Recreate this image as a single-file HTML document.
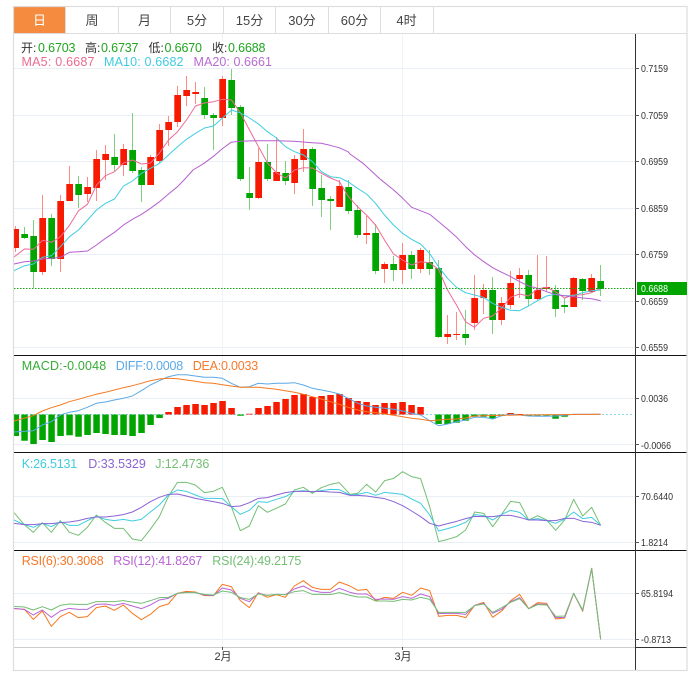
<!DOCTYPE html>
<html lang="zh"><head><meta charset="utf-8"><title>K线图</title>
<style>
html,body{margin:0;padding:0;background:#fff;width:698px;height:683px;overflow:hidden}
svg{display:block;font-family:"Liberation Sans","Noto Sans CJK SC",sans-serif}
.ln{fill:none;stroke-width:1;stroke-linejoin:round}
.z{fill:none;stroke-width:3;stroke-linejoin:round}
.ax{font-size:10px;fill:#333}
</style></head><body>
<svg width="698" height="683" viewBox="0 0 698 683" xmlns="http://www.w3.org/2000/svg">
<!-- grid -->
<path d="M14 68.5H635M14 115.5H635M14 161.5H635M14 208.5H635M14 254.5H635M14 301.5H635M14 347.5H635M14 398.5H635M14 444.5H635M14 496.5H635M14 542.5H635M14 593.5H635M14 639.5H635" stroke="#e9eff4" fill="none"/>
<path d="M222.5 34V647M402.5 34V647" stroke="#edf4f7" fill="none"/>
<!-- toolbar -->
<rect x="14" y="7" width="51" height="26" fill="#f58b3f"/>
<path d="M65.5 7V33M118.5 7V33M170.5 7V33M223.5 7V33M275.5 7V33M328.5 7V33M380.5 7V33M433.5 7V33" stroke="#ddd" fill="none"/>
<path d="M14 33.5H687" stroke="#ddd"/>
<g font-size="13" fill="#444" text-anchor="middle">
<text x="39.5" y="25" fill="#fff">日</text><text x="92" y="25">周</text><text x="144.5" y="25">月</text><text x="197" y="25">5分</text><text x="249.5" y="25">15分</text><text x="302" y="25">30分</text><text x="354.5" y="25">60分</text><text x="406.5" y="25">4时</text>
</g>
<!-- wicks -->
<path stroke="#ff8a80" fill="none" d="M15.5 226V252M42.5 195V275M60.5 195V272M69.5 166V201M87.5 177V202M96.5 150V201M105.5 145V180M123.5 144V176M150.5 155V185M159.5 124V163M168.5 116V146M177.5 86V127M186.5 76V106M195.5 82V104M222.5 76V126M258.5 148V199M276.5 137V181M294.5 155V194M303.5 129V172M339.5 180V207M366.5 216V244M384.5 262V283M402.5 243V284M420.5 248V273M447.5 315V344M456.5 312V340M474.5 275V330M483.5 284V314M501.5 297V325M510.5 271V309M519.5 268V298M537.5 255V300M546.5 256V292M573.5 277V307M591.5 274V292"/>
<path stroke="#7ed07e" fill="none" d="M24.5 227V239M33.5 220V288M51.5 214V266M78.5 176V208M114.5 134V171M132.5 113V173M141.5 167V202M204.5 87V119M213.5 113V150M231.5 69V115M240.5 105V181M249.5 167V210M267.5 144V181M285.5 161V185M312.5 147V206M321.5 175V217M330.5 196V230M348.5 180V214M357.5 205V238M375.5 224V274M393.5 256V281M411.5 251V279M429.5 250V275M438.5 260V338M465.5 310V345M492.5 277V334M528.5 270V306M555.5 285V317M564.5 298V313M582.5 278V300M600.5 265V296"/>
<!-- red bodies -->
<path fill="#f51a00" d="M14 229H19V248H14zM39.3 218h6.7V272h-6.7zM57.3 201h6.7V259h-6.7zM66.3 184h6.7V201h-6.7zM84.3 187h6.7V194h-6.7zM93.3 159h6.7V188h-6.7zM102.3 154h6.7V160h-6.7zM120.3 149h6.7V165h-6.7zM147.3 157h6.7V185h-6.7zM156.3 130h6.7V161h-6.7zM165.3 122h6.7V130h-6.7zM174.3 95h6.7V122h-6.7zM183.3 90h6.7V96h-6.7zM192.3 92h6.7V94h-6.7zM219.3 79h6.7V118h-6.7zM255.3 162h6.7V198h-6.7zM273.3 172h6.7V181h-6.7zM291.3 159h6.7V183h-6.7zM300.3 149h6.7V160h-6.7zM336.3 186h6.7V207h-6.7zM363.3 233h6.7V235h-6.7zM381.3 264h6.7V269h-6.7zM399.3 255h6.7V270h-6.7zM417.3 250h6.7V269h-6.7zM444.3 334h6.7V337h-6.7zM453.3 334h6.7V335h-6.7zM471.3 298h6.7V323h-6.7zM480.3 290h6.7V298h-6.7zM498.3 303h6.7V320h-6.7zM507.3 283h6.7V305h-6.7zM516.3 275h6.7V279h-6.7zM534.3 290h6.7V299h-6.7zM543.3 287h6.7V289h-6.7zM570.3 278h6.7V307h-6.7zM588.3 278h6.7V292h-6.7z"/>
<!-- green bodies -->
<path fill="#00a500" d="M21.3 234h6.7V238h-6.7zM30.3 236h6.7V272h-6.7zM48.3 218h6.7V259h-6.7zM75.3 184h6.7V195h-6.7zM111.3 157h6.7V165h-6.7zM129.3 150h6.7V171h-6.7zM138.3 170h6.7V185h-6.7zM201.3 98h6.7V115h-6.7zM210.3 115h6.7V118h-6.7zM228.3 80h6.7V108h-6.7zM237.3 107h6.7V179h-6.7zM246.3 193h6.7V198h-6.7zM264.3 162h6.7V179h-6.7zM282.3 173h6.7V181h-6.7zM309.3 149h6.7V189h-6.7zM318.3 188h6.7V200h-6.7zM327.3 199h6.7V201h-6.7zM345.3 187h6.7V211h-6.7zM354.3 210h6.7V235h-6.7zM372.3 233h6.7V271h-6.7zM390.3 264h6.7V270h-6.7zM408.3 255h6.7V269h-6.7zM426.3 262h6.7V269h-6.7zM435.3 268h6.7V337h-6.7zM462.3 334h6.7V338h-6.7zM489.3 290h6.7V320h-6.7zM525.3 275h6.7V299h-6.7zM552.3 290h6.7V309h-6.7zM561.3 305h6.7V307h-6.7zM579.3 279h6.7V291h-6.7zM597.3 281h6.7V289h-6.7z"/>
<!-- MA lines -->
<polyline class="ln" stroke="#ee6a95" points="14,257 24.5,249 33.5,249.3 42.5,240.3 51.5,242.3 60.5,236.7 69.5,225.3 78.5,210.7 87.5,204.3 96.5,185 105.5,175.7 114.5,171.7 123.5,163 132.5,160 141.5,164 150.5,163 159.5,153 168.5,140 177.5,131.7 186.5,120 195.5,106 204.5,103 213.5,101.7 222.5,99.3 231.5,100 240.5,113 249.5,130 258.5,146.7 267.5,163 276.5,173 285.5,178 294.5,170 303.5,167.7 312.5,168 321.5,173.3 330.5,178 339.5,181.7 348.5,196.7 357.5,206.7 366.5,215 375.5,225 384.5,240 393.5,254 402.5,260 411.5,265 420.5,261.7 429.5,262.7 438.5,269.3 447.5,290 456.5,305 465.5,321.7 474.5,327.3 483.5,318.3 492.5,316 501.5,308.3 510.5,297.3 519.5,294 528.5,296 537.5,289 546.5,287.3 555.5,291.7 564.5,298 573.5,295 582.5,294.7 591.5,292.7 600.5,288.3"/>
<polyline class="ln" stroke="#3fcde0" points="14,270.7 24.5,265.7 33.5,264 42.5,257.3 51.5,255.7 60.5,246.7 69.5,236.7 78.5,230 87.5,220 96.5,210 105.5,203.3 114.5,199 123.5,186 132.5,181 141.5,173.3 150.5,168.3 159.5,163.3 168.5,155 177.5,146.7 186.5,139.3 195.5,133.3 204.5,128 213.5,126 222.5,118 231.5,110 240.5,113 249.5,118 258.5,124 267.5,131.7 276.5,138 285.5,146.7 294.5,151.7 303.5,155 312.5,161.7 321.5,171.7 330.5,176.7 339.5,177.7 348.5,182 357.5,188.3 366.5,194 375.5,203.3 384.5,215 393.5,225 402.5,233.3 411.5,239.3 420.5,244 429.5,253.3 438.5,266.7 447.5,278.3 456.5,287.3 465.5,292.7 474.5,295 483.5,297.3 492.5,303.3 501.5,307.3 510.5,310.3 519.5,310.7 528.5,306 537.5,300.7 546.5,296 555.5,294.3 564.5,295.7 573.5,295.7 582.5,292.7 591.5,290.7 600.5,290"/>
<polyline class="ln" stroke="#b55fcf" points="14,264 24.5,261.7 33.5,261 42.5,259 51.5,258.3 60.5,257.3 69.5,252.3 78.5,251.7 87.5,251 96.5,245 105.5,238.3 114.5,232.3 123.5,225 132.5,219.3 141.5,214.3 150.5,208.3 159.5,201.7 168.5,194 177.5,186.7 184,180 193,170 204,163.3 213,156.7 222,149 231,142.3 240,141.3 258,140.7 276,140.7 294,141.3 312,142.7 321,143.3 330,145.3 339,147.7 348,151.7 350,154 363,163.3 380,179 393.7,190 402.7,198.3 411.7,207.3 429.7,214.3 438.7,221.7 447.7,229.3 456.7,237.3 465.7,246.7 474.7,255 483.7,261.7 492.7,267.7 501.7,272.3 510.7,276.7 519.7,281.7 528.7,286 537.7,288.3 546.7,291.7 555.7,294.7 564.7,295.7 573.7,296.7 582.7,298 591.7,298.7 600.7,300.7"/>
<!-- current price -->
<path d="M14 288.5H635" stroke="#10a810" stroke-dasharray="1.5 1.5" fill="none"/>
<!-- MACD -->
<path d="M14 414.5H633" stroke="#8fd8ec" stroke-dasharray="2 2" fill="none"/>
<path fill="#f51a00" d="M165.3 412h6.5v2.5h-6.5zM174.3 407h6.5v7.5h-6.5zM183.3 405h6.5v9.5h-6.5zM192.3 404h6.5v10.5h-6.5zM201.3 405h6.5v9.5h-6.5zM210.3 403h6.5v11.5h-6.5zM219.3 401h6.5v13.5h-6.5zM228.3 408h6.5v6.5h-6.5zM246.3 413.7h6.5v.8h-6.5zM255.3 408h6.5v6.5h-6.5zM264.3 406h6.5v8.5h-6.5zM273.3 402h6.5v12.5h-6.5zM282.3 399h6.5v15.5h-6.5zM291.3 395h6.5v19.5h-6.5zM300.3 394h6.5v20.5h-6.5zM309.3 397h6.5v17.5h-6.5zM318.3 396h6.5v18.5h-6.5zM327.3 395h6.5v19.5h-6.5zM336.3 394h6.5v20.5h-6.5zM345.3 398h6.5v16.5h-6.5zM354.3 401h6.5v13.5h-6.5zM363.3 402h6.5v12.5h-6.5zM372.3 405h6.5v9.5h-6.5zM381.3 403h6.5v11.5h-6.5zM390.3 403h6.5v11.5h-6.5zM399.3 402h6.5v12.5h-6.5zM408.3 405h6.5v9.5h-6.5zM417.3 407h6.5v7.5h-6.5zM507.3 413h6.5v1.5h-6.5zM516.3 414h6.5v.5h-6.5z"/>
<path fill="#00a500" d="M14 414.5h5V436h-5zM21.3 414.5h6.5V440.7h-6.5zM30.3 414.5h6.5V444h-6.5zM39.3 414.5h6.5V440h-6.5zM48.3 414.5h6.5V442h-6.5zM57.3 414.5h6.5V436h-6.5zM66.3 414.5h6.5V435.3h-6.5zM75.3 414.5h6.5V436.7h-6.5zM84.3 414.5h6.5V435h-6.5zM93.3 414.5h6.5V433h-6.5zM102.3 414.5h6.5V434h-6.5zM111.3 414.5h6.5V435h-6.5zM120.3 414.5h6.5V435h-6.5zM129.3 414.5h6.5V436h-6.5zM138.3 414.5h6.5V433h-6.5zM147.3 414.5h6.5V425h-6.5zM156.3 414.5h6.5V418h-6.5zM237.3 414.5h6.5V415.7h-6.5zM435.3 414.5h6.5V424h-6.5zM444.3 414.5h6.5V424h-6.5zM453.3 414.5h6.5V422.7h-6.5zM462.3 414.5h6.5V420.7h-6.5zM471.3 414.5h6.5V416.7h-6.5zM480.3 414.5h6.5V416.7h-6.5zM489.3 414.5h6.5V418.7h-6.5zM498.3 414.5h6.5V416h-6.5zM525.3 414.5h6.5V416h-6.5zM534.3 414.5h6.5V415.7h-6.5zM543.3 414.5h6.5V415.7h-6.5zM552.3 414.5h6.5V418.7h-6.5zM561.3 414.5h6.5V416.7h-6.5z"/>
<polyline class="ln" stroke="#5aa9e8" points="14,432 33.3,430.7 42.3,425 51.3,421.7 60.3,415 69.3,412.3 78.3,410.7 87.3,407.3 96.3,403.3 105.3,402 114.3,400 123.3,398.3 132.3,396 141.3,390.7 150.3,385 159.3,380.7 168.3,376.7 177.3,374.7 186.3,374.7 195.3,376 204.3,377.3 213.3,377.3 222.3,378.3 231.3,383.3 240.3,387.3 249.3,386.7 258.3,383.3 267.3,384 276.3,383.3 285.3,383.3 294.3,382.7 303.3,385 312.3,388.3 321.3,390 330.3,391.7 339.3,394 348.3,398.3 357.7,403.3 366.7,406 375.7,407.3 384.7,408.3 393.7,409.3 402.7,411 411.7,413.3 420.7,415 429.7,420.7 438.7,425.7 447.7,424 456.7,421.7 465.7,420 474.7,417.3 483.7,417.3 492.7,419 501.7,415.7 510.7,414.3 519.7,415 528.7,416 537.7,416.3 546.7,416.3 555.7,416 564.7,415.3 573.7,414.3 600.7,414.3"/>
<polyline class="ln" stroke="#f5781f" points="14,421 33.3,415.7 42.3,411 51.3,407.7 60.3,405 69.3,401.7 78.3,399.3 87.3,396.7 96.3,394.3 105.3,392.3 114.3,390 123.3,387.7 132.3,385.7 141.3,383.3 150.3,380.7 159.3,379 168.3,378.3 177.3,378.7 186.3,380 195.3,381.3 204.3,382.7 213.3,383.3 222.3,384.7 231.3,386 240.3,387.3 258.3,387.3 267.3,388.3 276.3,389.3 285.3,390.7 294.3,392.3 303.3,394.3 312.3,396.7 321.3,399 330.3,401.7 339.3,404.3 348.3,407.3 357.7,410 366.7,411.7 375.7,412.7 384.7,414 393.7,415.3 402.7,416.7 411.7,418.3 420.7,419.3 429.7,420.7 438.7,420 447.7,419.3 456.7,419 465.7,418 474.7,416 483.7,415.7 501.7,415.3 519.7,415 600.7,414.3"/>
<!-- KDJ left -->
<g transform="translate(0,450) scale(.33333)">
<polyline class="z" stroke="#74bf74" points="42,188 73,224 100,247 127,218 154,247 181,212 208,247 235,256 262,232 289,195 316,217 343,235 370,235 397,267 424,272 451,238 478,200 505,140 532,97 559,97 586,105 613,128 640,124 667,112 694,170 721,242 748,228 775,167 802,187 829,175 856,162 883,120 910,112 937,130 964,113 991,103 1018,98 1050,133"/>
<polyline class="z" stroke="#3fcde0" points="42,210 73,224 100,232 127,220 154,230 181,215 208,226 235,226 262,212 289,199 316,208 343,212 370,208 397,213 424,208 451,186 478,165 505,135 532,120 559,124 586,135 613,145 640,145 667,146 694,170 721,193 748,181 775,155 802,157 829,148 856,140 883,125 910,122 937,126 964,122 991,118 1018,119 1050,135"/>
<polyline class="z" stroke="#8a63d2" points="42,220 73,224 100,224 127,221 154,221 181,218 208,216 235,212 262,205 289,201 316,201 343,198 370,194 397,186 424,172 451,155 478,142 505,133 532,132 559,138 586,145 613,150 640,155 667,160 694,170 721,168 748,158 775,145 802,143 829,135 856,128 883,124 910,124 937,125 964,124 991,126 1018,127 1050,136"/>
</g>
<!-- KDJ right -->
<g transform="translate(350,450) scale(.33333)">
<polyline class="z" stroke="#74bf74" points="0,133 23,130 50,103 77,126 104,92 131,85 158,65 185,80 212,86 239,170 266,275 293,268 320,260 347,240 374,186 401,190 428,230 455,193 482,154 509,158 536,210 563,197 590,210 617,241 644,210 671,148 698,198 725,172 752,226"/>
<polyline class="z" stroke="#3fcde0" points="0,135 23,133 50,127 77,136 104,127 131,130 158,133 185,147 212,160 239,195 266,243 293,236 320,228 347,217 374,194 401,197 428,210 455,193 482,181 509,187 536,210 563,206 590,212 617,220 644,207 671,186 698,206 725,202 752,226"/>
<polyline class="z" stroke="#8a63d2" points="0,136 23,136 50,138 77,142 104,146 131,155 158,167 185,183 212,200 239,220 266,228 293,221 320,214 347,206 374,199 401,200 428,200 455,196 482,196 509,202 536,210 563,210 590,212 617,212 644,205 671,205 698,214 725,217 752,226"/>
</g>
<!-- RSI left -->
<g transform="translate(0,550) scale(.33333)">
<polyline class="z" stroke="#f5781f" points="42,176 73,178 100,208 127,183 154,229 181,200 208,187 235,203 262,200 289,173 316,168 343,181 370,165 397,190 424,209 451,193 478,170 505,162 532,130 559,124 586,126 613,137 640,137 667,103 694,110 721,152 748,173 775,128 802,142 829,134 856,142 883,108 910,92 937,112 964,118 991,118 1018,96 1050,108"/>
<polyline class="z" stroke="#b964d4" points="42,175 73,178 100,195 127,180 154,202 181,183 208,175 235,178 262,178 289,163 316,162 343,166 370,160 397,168 424,176 451,165 478,150 505,145 532,130 559,127 586,128 613,135 640,137 667,114 694,120 721,145 748,155 775,130 802,136 829,133 856,134 883,117 910,108 937,122 964,127 991,127 1018,115 1050,127"/>
<polyline class="z" stroke="#74bf74" points="42,169 73,171 100,180 127,170 154,180 181,166 208,162 235,163 262,163 289,155 316,155 343,155 370,152 397,156 424,160 451,152 478,143 505,142 532,130 559,128 586,128 613,133 640,135 667,123 694,127 721,143 748,148 775,132 802,136 829,133 856,134 883,125 910,122 937,133 964,133 991,134 1018,128 1050,136"/>
</g>
<!-- RSI right -->
<g transform="translate(350,550) scale(.33333)">
<polyline class="z" stroke="#f5781f" points="0,108 23,121 50,118 77,152 104,142 131,145 158,127 185,136 212,114 239,122 266,199 293,196 320,196 347,203 374,166 401,157 428,202 455,183 482,152 509,133 536,176 563,158 590,160 617,207 644,204 671,130 698,184 725,55 752,268"/>
<polyline class="z" stroke="#b964d4" points="0,127 23,132 50,132 77,148 104,147 131,148 158,140 185,145 212,132 239,140 266,191 293,190 320,190 347,193 374,166 401,160 428,190 455,178 482,155 509,143 536,176 563,162 590,163 617,203 644,202 671,130 698,182 725,55 752,268"/>
<polyline class="z" stroke="#74bf74" points="0,136 23,141 50,141 77,153 104,153 131,154 158,148 185,150 212,142 239,148 266,187 293,187 320,187 347,187 374,167 401,162 428,187 455,173 482,157 509,146 536,176 563,164 590,165 617,199 644,198 671,130 698,180 725,55 752,268"/>
</g>
<!-- separators -->
<path d="M14 355.5H687M14 452.5H687M14 550.5H687" stroke="#111" fill="none"/>
<path d="M14 647.5H635" stroke="#ccc" fill="none"/>
<path d="M635 647.5H687" stroke="#333" fill="none"/>
<path d="M635.5 34V670" stroke="#333" fill="none"/>
<path d="M635 68.5h4M635 115.5h4M635 161.5h4M635 208.5h4M635 254.5h4M635 301.5h4M635 347.5h4M635 398.5h4M635 444.5h4M635 496.5h4M635 542.5h4M635 593.5h4M635 639.5h4M222.5 647v3M402.5 647v3" stroke="#555" fill="none"/>
<!-- outer border -->
<rect x="13.5" y="6.5" width="673.5" height="664" fill="none" stroke="#ddd" stroke-width="1.2"/>
<!-- price tag -->
<rect x="637" y="282" width="50" height="13" fill="#00a500"/>
<text x="641" y="292" font-size="10" fill="#fff" textLength="27" lengthAdjust="spacingAndGlyphs">0.6688</text>
<!-- axis labels -->
<g class="ax">
<text x="641" y="72" textLength="27" lengthAdjust="spacingAndGlyphs">0.7159</text>
<text x="641" y="119" textLength="27" lengthAdjust="spacingAndGlyphs">0.7059</text>
<text x="641" y="165" textLength="27" lengthAdjust="spacingAndGlyphs">0.6959</text>
<text x="641" y="212" textLength="27" lengthAdjust="spacingAndGlyphs">0.6859</text>
<text x="641" y="258" textLength="27" lengthAdjust="spacingAndGlyphs">0.6759</text>
<text x="641" y="305" textLength="27" lengthAdjust="spacingAndGlyphs">0.6659</text>
<text x="641" y="351" textLength="27" lengthAdjust="spacingAndGlyphs">0.6559</text>
<text x="641" y="402" textLength="27" lengthAdjust="spacingAndGlyphs">0.0036</text>
<text x="641" y="449" textLength="30" lengthAdjust="spacingAndGlyphs">-0.0066</text>
<text x="641" y="500" textLength="32" lengthAdjust="spacingAndGlyphs">70.6440</text>
<text x="641" y="546" textLength="27" lengthAdjust="spacingAndGlyphs">1.8214</text>
<text x="641" y="597" textLength="32" lengthAdjust="spacingAndGlyphs">65.8194</text>
<text x="641" y="643" textLength="30" lengthAdjust="spacingAndGlyphs">-0.8713</text>
</g>
<g font-size="11" fill="#333" text-anchor="middle"><text x="223" y="660">2月</text><text x="403" y="660">3月</text></g>
<!-- legends -->
<g font-size="12.5">
<text x="21" y="52" fill="#333" font-size="12">开:</text><text x="38" y="52" fill="#1fa51f" textLength="37.5">0.6703</text>
<text x="85" y="52" fill="#333" font-size="12">高:</text><text x="101" y="52" fill="#1fa51f" textLength="37.5">0.6737</text>
<text x="148.5" y="52" fill="#333" font-size="12">低:</text><text x="164.5" y="52" fill="#1fa51f" textLength="37.5">0.6670</text>
<text x="212" y="52" fill="#333" font-size="12">收:</text><text x="228" y="52" fill="#1fa51f" textLength="37.5">0.6688</text>
<text x="21.5" y="66" fill="#ec6b92" textLength="73">MA5: 0.6687</text>
<text x="104" y="66" fill="#3fcbe0" textLength="79.5">MA10: 0.6682</text>
<text x="193.5" y="66" fill="#b96bd0" textLength="78.5">MA20: 0.6661</text>
<text x="21.7" y="370" fill="#35ad35" textLength="84.5">MACD:-0.0048</text>
<text x="115.7" y="370" fill="#5aa9e8" textLength="67.5">DIFF:0.0008</text>
<text x="192.7" y="370" fill="#f57a2b" textLength="65.5">DEA:0.0033</text>
<text x="21.7" y="468" fill="#3fcbe0" textLength="55.5">K:26.5131</text>
<text x="88.3" y="468" fill="#8a63d2" textLength="57.5">D:33.5329</text>
<text x="155.3" y="468" fill="#74bf74" textLength="54">J:12.4736</text>
<text x="21.7" y="565" fill="#f57a2b" textLength="82">RSI(6):30.3068</text>
<text x="113.3" y="565" fill="#b964d4" textLength="89">RSI(12):41.8267</text>
<text x="212.3" y="565" fill="#74bf74" textLength="89">RSI(24):49.2175</text>
</g>
</svg>
</body></html>
